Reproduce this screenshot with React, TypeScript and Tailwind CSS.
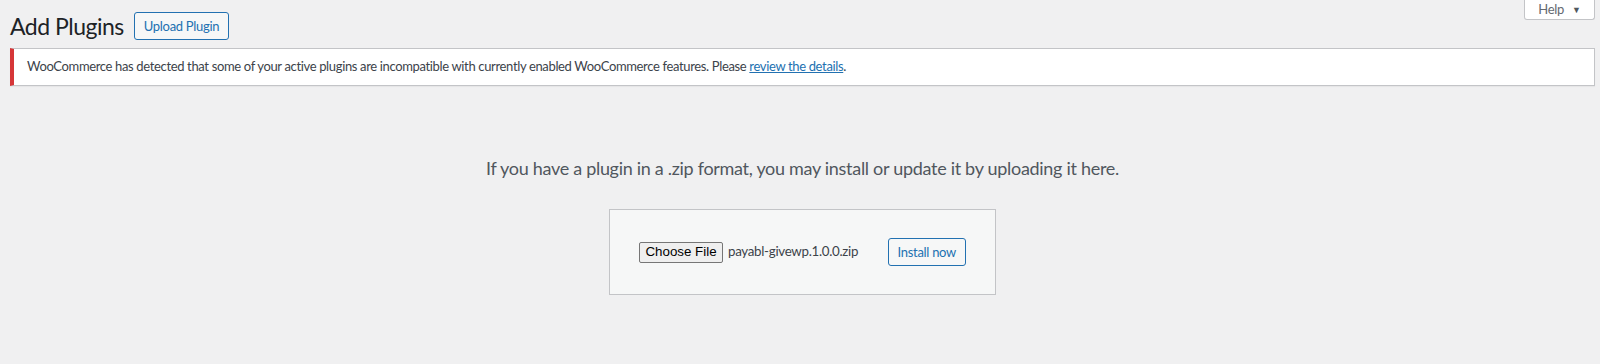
import React from 'react';

const font = { fontFamily: 'Lato, "Noto Sans", sans-serif' };

const HelpTab: React.FC = () => (
    <div className="absolute top-0 right-[5px] w-[71px] h-[20px] bg-white border border-t-0 border-[#c3c4c7] rounded-b-[3px] flex items-center justify-center gap-[8px] text-[13px] text-[#646970]">
        <span className="leading-none">Help</span>
        <span className="text-[9px] leading-none text-[#50575e]">▼</span>
    </div>
);

const App: React.FC = () => {
    return (
        <div className="relative min-h-[364px] bg-[#f0f0f1] text-[#3c434a] tracking-[-0.3px]" style={font}>
            <HelpTab />

            <div className="ml-[10px] mr-[5px]">
                {/* Header */}
                <div className="flex items-center gap-[10px] pt-[12px]">
                    <h1 className="text-[23px] leading-[28px] text-[#1d2327] font-normal tracking-[-0.5px]">Add Plugins</h1>
                    <button className="h-[28px] px-[9px] text-[13px] leading-none text-[#2271b1] bg-[#f6f7f7] border border-[#2271b1] rounded-[3px]">
                        Upload Plugin
                    </button>
                </div>

                {/* Notice */}
                <div className="mt-[8px] h-[38px] flex items-center bg-white border border-[#c3c4c7] border-l-4 border-l-[#d63638] shadow-[0_1px_1px_rgba(0,0,0,0.04)] pl-[13px] text-[13px] tracking-[-0.35px]">
                    <p>
                        WooCommerce has detected that some of your active plugins are incompatible with currently enabled WooCommerce features. Please{' '}
                        <a className="text-[#2271b1] underline">review the details</a>.
                    </p>
                </div>

                {/* Upload area */}
                <div className="flex flex-col items-center">
                    <p className="mt-[70px] text-[18px] leading-[24px] text-[#50575e]">
                        If you have a plugin in a .zip format, you may install or update it by uploading it here.
                    </p>
                    <div className="mt-[29px] w-[387px] h-[86px] bg-[#f6f7f7] border border-[#c3c4c7] flex items-center pl-[29px]">
                        <div className="flex items-center">
                            <span className="h-[21px] w-[84px] flex items-center justify-center bg-[#efefef] border border-[#767676] rounded-[2px] text-[13.33px] text-black tracking-normal" style={{ fontFamily: '"Liberation Sans", Arial, sans-serif' }}>
                                Choose File
                            </span>
                            <span className="ml-[5px] text-[13.33px] text-[#3c434a]">payabl-givewp.1.0.0.zip</span>
                        </div>
                        <button className="ml-auto mr-[29px] h-[28px] px-[9px] text-[13px] leading-none text-[#2271b1] bg-[#f6f7f7] border border-[#2271b1] rounded-[3px]">
                            Install now
                        </button>
                    </div>
                </div>
            </div>
        </div>
    );
};

export default App;
